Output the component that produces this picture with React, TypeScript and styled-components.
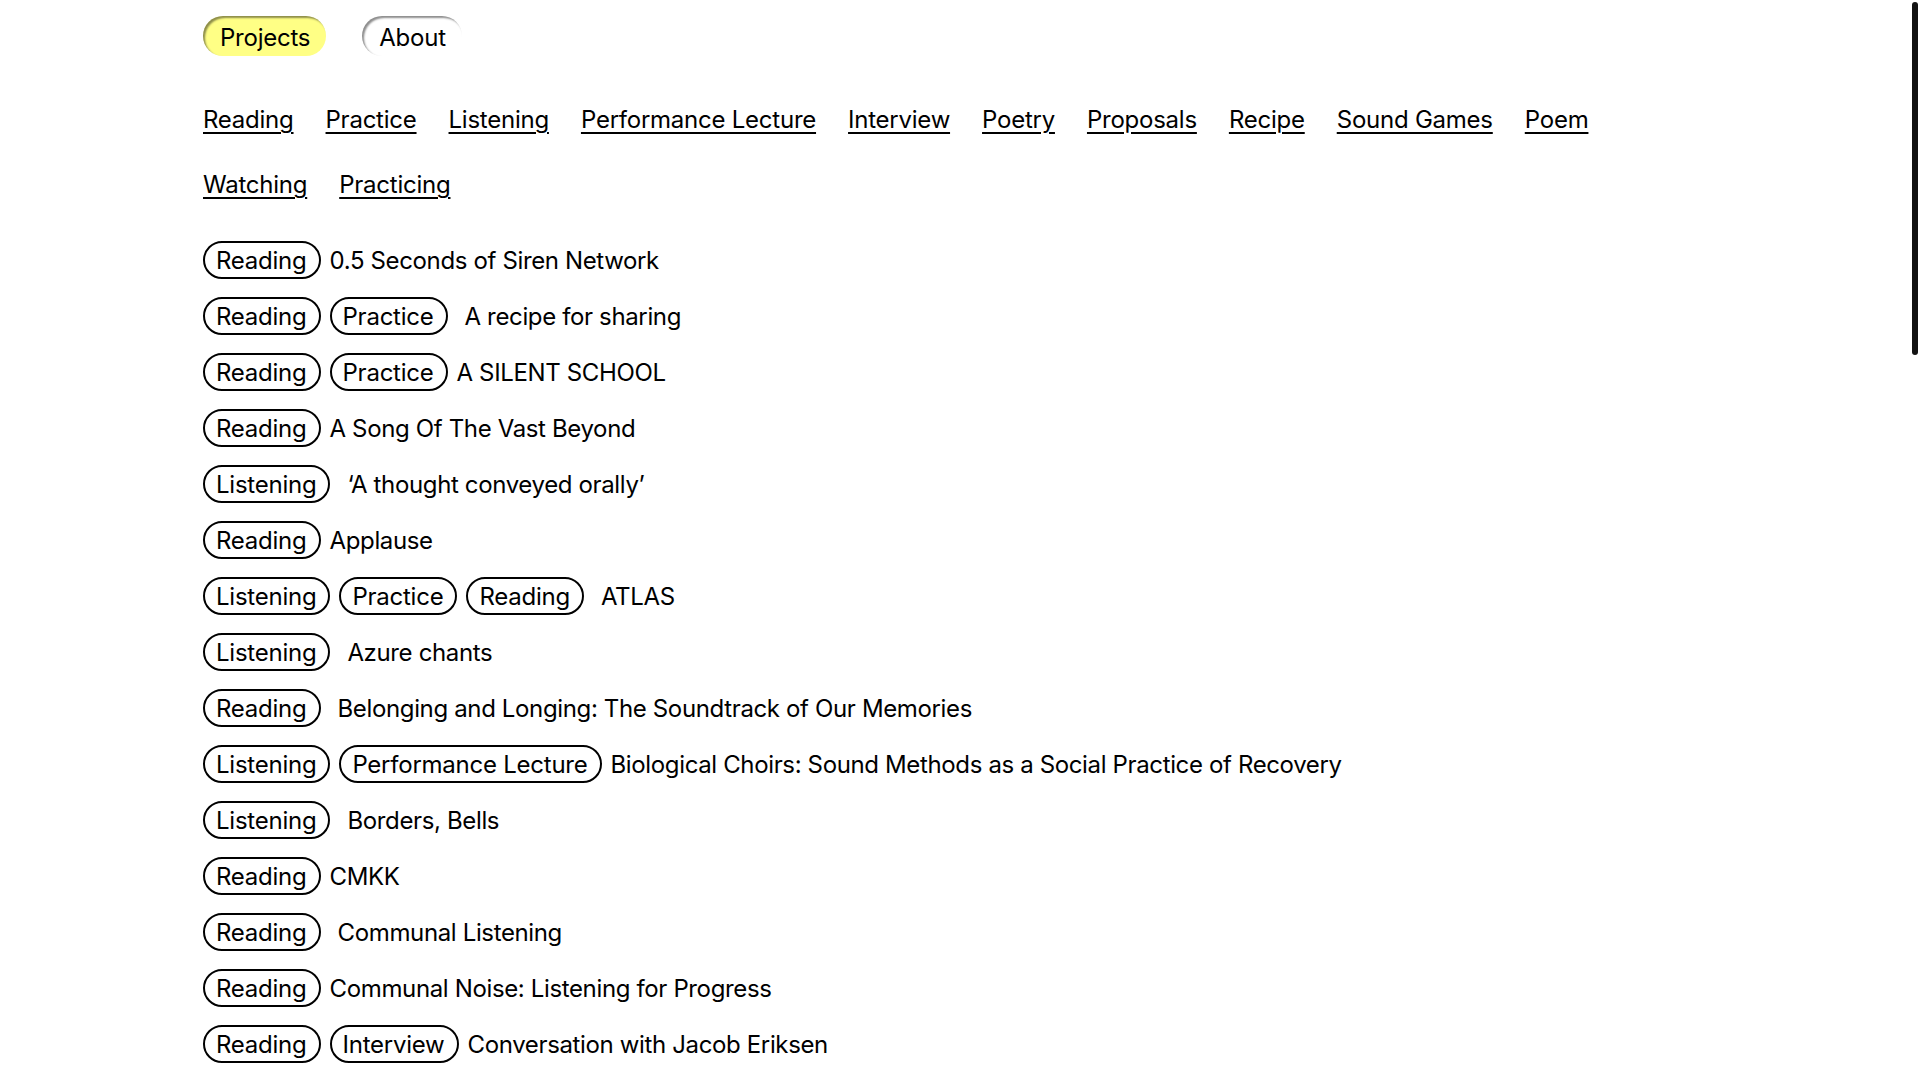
import styled, { createGlobalStyle } from "styled-components";

const GlobalStyle = createGlobalStyle`
  html, body {
    margin: 0;
    padding: 0;
    background: #ffffff;
  }
  body {
    font-family: "Inter", "Liberation Sans", sans-serif;
    color: #000000;
    overflow: hidden;
  }
`;

const Page = styled.div`
  padding: 16px 203px 0 203px;
  font-size: 24px;
  letter-spacing: -0.01em;
`;

const Nav = styled.nav`
  display: flex;
  gap: 36px;
`;

const NavPill = styled.a<{ $active?: boolean }>`
  display: flex;
  align-items: center;
  height: 40px;
  padding: 2px 16px 0 17px;
  box-sizing: border-box;
  border-radius: 20px;
  background: ${(p) => (p.$active ? "#ffff85" : "#ffffff")};
  box-shadow: inset 2px 2px 2px rgba(0, 0, 0, 0.45);
  color: #000;
  text-decoration: none;
  cursor: pointer;
`;

const Filters = styled.ul`
  list-style: none;
  margin: 49px 0 0 0;
  padding: 0;
  display: flex;
  flex-wrap: wrap;
  column-gap: 32px;
  row-gap: 35px;
`;

const FilterLink = styled.a`
  display: block;
  line-height: 30px;
  color: #000;
  text-decoration: underline;
  text-decoration-thickness: 2px;
  text-underline-offset: 4px;
  cursor: pointer;
`;

const ProjectList = styled.ul`
  list-style: none;
  margin: 41px 0 0 0;
  padding: 0;
  display: flex;
  flex-direction: column;
  gap: 18px;
`;

const Row = styled.li`
  display: flex;
  align-items: center;
  gap: 9px;
  height: 38px;
`;

const Tag = styled.span`
  display: flex;
  align-items: center;
  height: 38px;
  box-sizing: border-box;
  padding: 1px 12px 0 11px;
  border: 2px solid #000;
  border-radius: 19px;
  white-space: nowrap;
`;

const Title = styled.span<{ $spaced?: boolean }>`
  margin-left: ${(p) => (p.$spaced ? "8px" : "0")};
  padding-top: 1px;
  letter-spacing: -0.015em;
  white-space: nowrap;
`;

const ScrollThumb = styled.div`
  position: fixed;
  top: 2px;
  right: 2px;
  width: 6px;
  height: 353px;
  border-radius: 3px;
  background: #121212;
`;

const filters = [
  "Reading",
  "Practice",
  "Listening",
  "Performance Lecture",
  "Interview",
  "Poetry",
  "Proposals",
  "Recipe",
  "Sound Games",
  "Poem",
  "Watching",
  "Practicing",
];

type Project = { tags: string[]; title: string; spaced?: boolean };

const projects: Project[] = [
  { tags: ["Reading"], title: "0.5 Seconds of Siren Network" },
  { tags: ["Reading", "Practice"], title: "A recipe for sharing", spaced: true },
  { tags: ["Reading", "Practice"], title: "A SILENT SCHOOL" },
  { tags: ["Reading"], title: "A Song Of The Vast Beyond" },
  { tags: ["Listening"], title: "\u2018A thought conveyed orally\u2019", spaced: true },
  { tags: ["Reading"], title: "Applause" },
  { tags: ["Listening", "Practice", "Reading"], title: "ATLAS", spaced: true },
  { tags: ["Listening"], title: "Azure chants", spaced: true },
  { tags: ["Reading"], title: "Belonging and Longing: The Soundtrack of Our Memories", spaced: true },
  {
    tags: ["Listening", "Performance Lecture"],
    title: "Biological Choirs: Sound Methods as a Social Practice of Recovery",
  },
  { tags: ["Listening"], title: "Borders, Bells", spaced: true },
  { tags: ["Reading"], title: "CMKK" },
  { tags: ["Reading"], title: "Communal Listening", spaced: true },
  { tags: ["Reading"], title: "Communal Noise: Listening for Progress" },
  { tags: ["Reading", "Interview"], title: "Conversation with Jacob Eriksen" },
];

function App() {
  return (
    <>
      <GlobalStyle />
      <Page>
        <Nav>
          <NavPill $active>Projects</NavPill>
          <NavPill>About</NavPill>
        </Nav>

        <Filters>
          {filters.map((f) => (
            <li key={f}>
              <FilterLink>{f}</FilterLink>
            </li>
          ))}
        </Filters>

        <ProjectList>
          {projects.map((p) => (
            <Row key={p.title}>
              {p.tags.map((t) => (
                <Tag key={t}>{t}</Tag>
              ))}
              <Title $spaced={p.spaced}>{p.title}</Title>
            </Row>
          ))}
        </ProjectList>
      </Page>
      <ScrollThumb />
    </>
  );
}

export default App;
